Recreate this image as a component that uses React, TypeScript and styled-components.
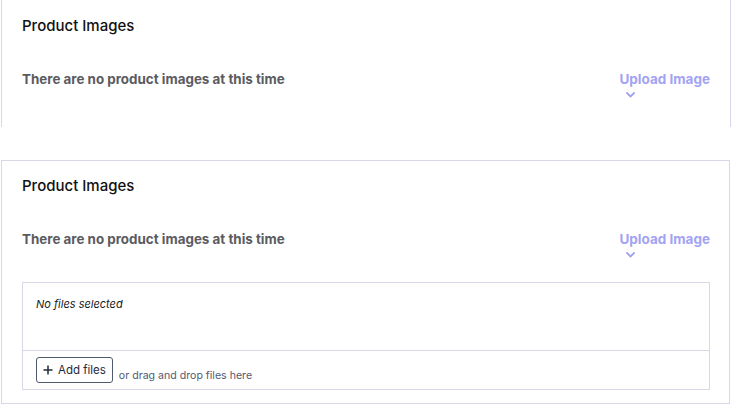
import React from "react";
import styled, { createGlobalStyle } from "styled-components";

const Global = createGlobalStyle`
  html, body { margin: 0; padding: 0; background: #ffffff; }
  body { font-family: Inter, "Liberation Sans", Arial, sans-serif; color: #111; }
`;

const Page = styled.div`
  display: flex;
  flex-direction: column;
  gap: 33px;
  width: 732px;
  padding: 0 1px 0 1px;
  box-sizing: border-box;
`;

const Panel = styled.section<{ $cropped?: boolean }>`
  border: 1px solid #d6d8e7;
  border-width: ${(p) => (p.$cropped ? "0 1px 0 1px" : "1px")};
  margin-right: ${(p) => (p.$cropped ? "0" : "1px")};
  padding: ${(p) => (p.$cropped ? "16px 20px 0 20px" : "15px 19px 13px 20px")};
  height: ${(p) => (p.$cropped ? "127px" : "auto")};
  box-sizing: border-box;
  display: flex;
  flex-direction: column;
`;

const Title = styled.h2`
  margin: 0;
  font-size: 15px;
  line-height: 20px;
  font-weight: 500;
  color: #111;
`;

const Row = styled.div`
  display: flex;
  justify-content: space-between;
  align-items: flex-start;
  margin-top: 33px;
`;

const Message = styled.p`
  margin: 0;
  font-size: 13.4px;
  line-height: 20px;
  font-weight: 700;
  color: #5b5b5f;
`;

const Upload = styled.button`
  display: flex;
  flex-direction: column;
  align-items: flex-start;
  border: 0;
  background: none;
  padding: 0;
  font-family: inherit;
  font-size: 13.5px;
  line-height: 20px;
  font-weight: 700;
  color: #a2a3f2;
  cursor: pointer;
`;

const Chevron = styled.svg`
  margin-left: 7px;
  margin-top: 3px;
  margin-bottom: 1px;
`;

const Dropzone = styled.div`
  margin-top: 23px;
  border: 1px solid #d6d8e7;
  display: flex;
  flex-direction: column;
`;

const FileList = styled.div`
  height: 68px;
  padding: 13px 13px 0;
  box-sizing: border-box;
  font-size: 11px;
  line-height: 16px;
  font-style: italic;
  color: #1a1a1a;
  border-bottom: 1px solid #d6d8e7;
`;

const Footer = styled.div`
  display: flex;
  align-items: flex-end;
  gap: 6px;
  padding: 6px 13px 6px;
`;

const AddButton = styled.button`
  display: flex;
  align-items: center;
  gap: 5px;
  height: 26px;
  padding: 0 6px 0 6px;
  border: 1px solid #4f5a6e;
  border-radius: 3px;
  background: #fff;
  font-family: inherit;
  font-size: 11.5px;
  color: #222a3a;
`;

const Hint = styled.span`
  font-size: 10.6px;
  line-height: 14px;
  color: #535a72;
`;

function ProductImages({ cropped, withDropzone }: { cropped?: boolean; withDropzone?: boolean }) {
  return (
    <Panel $cropped={cropped}>
      <Title>Product Images</Title>
      <Row>
        <Message>There are no product images at this time</Message>
        <Upload>
          Upload Image
          <Chevron width="9" height="6" viewBox="0 0 9 6" fill="none">
            <path d="M1 1l3.5 3.5L8 1" stroke="#a2a3f2" strokeWidth="1.8" strokeLinecap="round" strokeLinejoin="round" />
          </Chevron>
        </Upload>
      </Row>
      {withDropzone && (
        <Dropzone>
          <FileList>No files selected</FileList>
          <Footer>
            <AddButton>
              <svg width="10" height="10" viewBox="0 0 10 10">
                <path d="M5 0.5v9M0.5 5h9" stroke="#222a3a" strokeWidth="1.5" />
              </svg>
              Add files
            </AddButton>
            <Hint>or drag and drop files here</Hint>
          </Footer>
        </Dropzone>
      )}
    </Panel>
  );
}

export default function App() {
  return (
    <>
      <Global />
      <Page>
        <ProductImages cropped />
        <ProductImages withDropzone />
      </Page>
    </>
  );
}
